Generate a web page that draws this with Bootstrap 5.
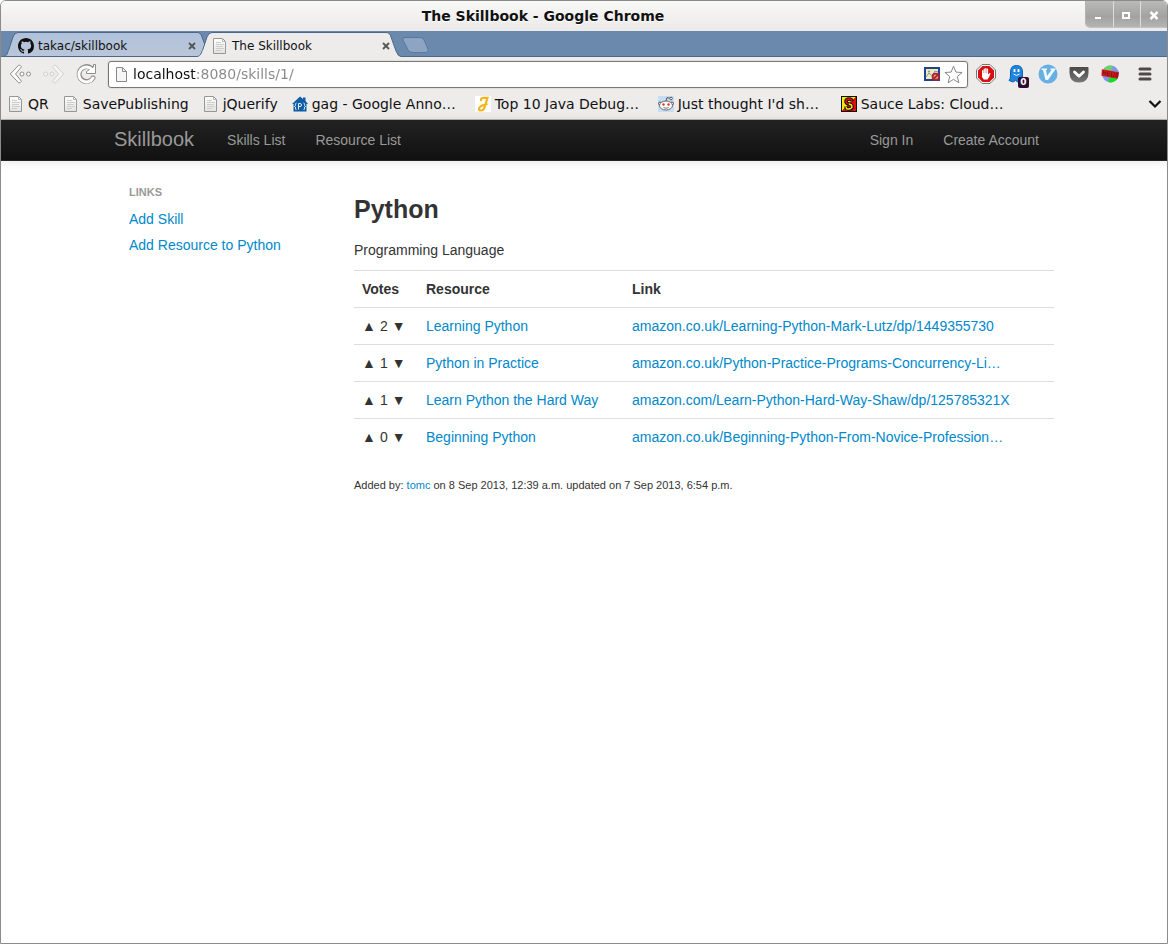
<!DOCTYPE html>
<html lang="en">
<head>
<meta charset="utf-8">
<meta name="viewport" content="width=device-width, initial-scale=1">
<title>The Skillbook</title>
<link href="https://cdn.jsdelivr.net/npm/bootstrap@5.3.0/dist/css/bootstrap.min.css" rel="stylesheet">
<style>
  :root { --chrome: #edeceb; --edge: #8b8b89; --link: #0088cc; }
  body { font: 14px/20px "Liberation Sans", Arial, sans-serif; color: #333; }
  svg { display: block; flex: none; }
  .app-window { border: 1px solid var(--edge); border-radius: 6px 6px 0 0; overflow: hidden; background: #fff; }
  .chrome-ui { font-family: "DejaVu Sans", sans-serif; color: #111; background: var(--chrome); }
  .chrome-ui button { border: 0; padding: 0; background: none; }

  /* title bar */
  .titlebar { height: 30px; background: linear-gradient(#f8f8f7, #ebeae8); }
  .window-title { font-size: 14px; font-weight: 700; line-height: 30px; text-shadow: 0 1px #fff; }
  .chrome-ui .window-buttons { height: 27px; border-left: 1px solid #b4b4b2; border-bottom: 1px solid #c4c3c1; border-radius: 0 0 0 5px; overflow: hidden; }
  .chrome-ui .window-buttons button { width: 27px; background: linear-gradient(#bababa, #a2a2a0 60%, #b4b4b2); }
  .chrome-ui .window-buttons button + button { border-left: 1px solid #dededc; }

  /* tab strip */
  .tabstrip { height: 26px; background: #6b89ad; border-bottom: 1px solid #4c678d; padding-left: 2px; }
  .browser-tab { position: relative; width: 202px; height: 26px; padding: 3px 8px 0 15px; font-size: 12px; line-height: 22px; }
  .browser-tab + .browser-tab { margin-left: -8px; }
  .tab-shape { position: absolute; left: 0; top: 0; }
  .browser-tab > :not(.tab-shape) { position: relative; }

  /* toolbar */
  .toolbar { height: 34px; padding: 0 12px 0 7px; }
  .omnibox { height: 27px; border: 1px solid #777; border-radius: 3px; background: #fff; box-shadow: 0 0 0 1px #e0dfdd; }
  .address { border: 0; outline: 0; padding: 0; min-width: 0; font: 14px/20px "DejaVu Sans", sans-serif; color: transparent; caret-color: #111; background: linear-gradient(90deg, #111 64px, #888 64px); -webkit-background-clip: text; background-clip: text; }
  .extensions { gap: 11px; margin-left: 8px; }
  .ext-badge { position: absolute; left: 11px; top: 13px; width: 11px; height: 11px; border-radius: 2px; background: #2b0c33; color: #fff; font-size: 9px; line-height: 11px; font-weight: 700; text-align: center; }

  /* bookmarks */
  .bookmarks { height: 29px; padding: 0 5px 2px 7px; gap: 14px; border-bottom: 1px solid #b5b4b2; font-size: 14px; line-height: 24px; }
  .bookmarks a { color: #111; text-decoration: none; white-space: nowrap; }
  .bookmarks .long-mark { width: 169px; }

  /* page */
  .page-container { width: 100%; max-width: 940px; margin: 0 auto; }
  .site-nav { height: 41px; padding: 0; background: linear-gradient(#222, #111); border-bottom: 1px solid #252525; box-shadow: 0 1px 10px rgba(0,0,0,.1); }
  .site-nav .navbar-brand { font-size: 20px; line-height: 20px; padding: 0 0 2px; margin: 0 18px 0 0; color: #999; }
  .site-nav .nav-link { padding: 10px 15px; color: #999; }
  .page-body { padding-top: 20px; }
  .page-body a { color: var(--link); text-decoration: none; }
  .side-links { flex: none; width: 240px; padding: 0 15px; }
  .side-title { font-size: 11px; line-height: 22px; font-weight: 700; color: #999; text-transform: uppercase; margin: 0 0 3px; }
  .side-links a { padding: 3px 0; }
  .skill-detail { min-width: 0; }
  .skill-title { font-size: 25px; line-height: 40px; font-weight: 700; margin: 8px 0 11px; }
  .skill-summary { margin: 0 0 10px; }
  .skill-table { --bs-table-color: #333; margin: 0 0 20px; table-layout: fixed; }
  .skill-table > :not(caption) > * > * { padding: 8px; border-width: 1px 0 0; border-color: #ddd; }
  .votes-col { width: 64px; }
  .resource-col { width: 206px; }
  .vote-cell { white-space: nowrap; }
  .vote-cell button { border: 0; padding: 0; background: none; color: inherit; line-height: 20px; width: 14px; }
  .added-by { font-size: 11px; }
</style>
</head>
<body>
<svg width="0" height="0" class="position-absolute" aria-hidden="true">
  <defs>
    <linearGradient id="paper" x1="0" y1="0" x2="0" y2="1"><stop offset="0" stop-color="#fff"/><stop offset="1" stop-color="#e2e2e0"/></linearGradient>
    <linearGradient id="tabfill" x1="0" y1="0" x2="0" y2="1"><stop offset="0" stop-color="#b0c2da"/><stop offset="1" stop-color="#bac6d9"/></linearGradient>
    <linearGradient id="pocket" x1="0" y1="0" x2="0" y2="1"><stop offset="0" stop-color="#4a4a4a"/><stop offset="1" stop-color="#777"/></linearGradient>
    <symbol id="doc" viewBox="0 0 16 16"><path d="M1.500 .5h9l3 3v12h-12z" fill="url(#paper)" stroke="#969894"/><path d="M10.500 .5v3h3" fill="none" stroke="#b5b6b3"/><path d="M4 4.500h5M4 6.500h8M4 8.500h7M4 10.500h8M4 12.500h5" stroke="#cdcecb"/></symbol>
    <symbol id="cross" viewBox="0 0 10 10"><path d="M2 2l6 6M8 2L2 8" stroke="#555" stroke-width="1.800"/></symbol>
  </defs>
</svg>

<div class="app-window d-flex flex-column min-vh-100">
  <header class="chrome-ui">
    <div class="titlebar d-flex">
      <div class="window-title flex-grow-1 text-center">The Skillbook - Google Chrome</div>
      <div class="window-buttons d-flex">
        <button type="button" aria-label="Minimize"><svg width="26" height="26"><path d="M9 17h6" stroke="#fff" stroke-width="2"/></svg></button>
        <button type="button" aria-label="Maximize"><svg width="26" height="26"><path d="M9 12h6v5h-6z" fill="none" stroke="#fff" stroke-width="2"/></svg></button>
        <button type="button" aria-label="Close"><svg width="26" height="26"><path d="M9.500 11l7 7M16.500 11l-7 7" stroke="#fff" stroke-width="2.500"/></svg></button>
      </div>
    </div>

    <div class="tabstrip d-flex">
      <div class="browser-tab d-flex align-items-center gap-1">
        <svg class="tab-shape" width="202" height="26"><path d="M0 25.500C5 25 4 22 6 18L10 6Q11.500 1.500 15 1.500H194Q198 1.500 199 6L202 14V25.500Z" fill="url(#tabfill)" stroke="#4c678d"/></svg>
        <svg width="16" height="16" viewBox="0 0 16 16"><path fill="#111" d="M8 0C3.580 0 0 3.580 0 8c0 3.540 2.290 6.530 5.470 7.590.4.070.55-.17.55-.38 0-.19-.01-.82-.01-1.490-2.010.37-2.530-.49-2.690-.94-.09-.23-.48-.94-.82-1.130-.28-.15-.68-.52-.01-.53.63-.01 1.080.58 1.230.82.72 1.210 1.870.87 2.330.66.070-.52.28-.87.51-1.070-1.780-.2-3.640-.89-3.640-3.950 0-.87.31-1.590.82-2.150-.08-.2-.36-1.020.08-2.120 0 0 .67-.21 2.200.82a7.500 7.500 0 0 1 4 0c1.530-1.040 2.200-.82 2.200-.82.44 1.100.16 1.920.08 2.120.51.56.82 1.270.82 2.150 0 3.070-1.870 3.750-3.650 3.950.29.25.54.73.54 1.480 0 1.070-.01 1.930-.01 2.200 0 .21.15.46.55.38A8 8 0 0 0 16 8c0-4.420-3.580-8-8-8"/></svg>
        <span class="flex-grow-1">takac/skillbook</span>
        <button type="button" aria-label="Close takac/skillbook"><svg width="10" height="10"><use href="#cross"/></svg></button>
      </div>
      <div class="browser-tab d-flex align-items-center gap-1">
        <svg class="tab-shape" width="204" height="27"><path d="M-1 25.500C4 25 4 22 6 18L10 6Q11.500 1.500 15 1.500H189Q193 1.500 194 6L199 20Q201 25.500 204 25.500V27H-1Z" fill="#edeceb"/><path d="M0 25.500C4 25 4 22 6 18L10 6Q11.500 1.500 15 1.500H189Q193 1.500 194 6L199 20Q201 25.500 204 25.500" fill="none" stroke="#4c678d"/></svg>
        <svg width="16" height="16"><use href="#doc"/></svg>
        <span class="flex-grow-1">The Skillbook</span>
        <button type="button" aria-label="Close The Skillbook"><svg width="10" height="10"><use href="#cross"/></svg></button>
      </div>
      <button type="button" aria-label="New tab"><svg width="30" height="25"><path d="M4 6.500H21Q24 6.500 25 9L29 18Q30 21.500 26 21.500H14Q10 21.500 9 19L4 9Q3 6.500 6 6.500Z" fill="#8da4c2" stroke="#5a779e"/></svg></button>
    </div>

    <div class="toolbar d-flex align-items-center">
      <button type="button" class="me-2" aria-label="Back"><svg width="24" height="22" viewBox="0 0 24 22"><path d="M13.500 3.800L12 2.300 10.500 2.300 2.300 11 10.500 19.700H12L13.500 18.200 7.500 11Z" fill="#fcfcfc" stroke="#8f8f8c"/><circle cx="14" cy="11" r="2" fill="#fcfcfc" stroke="#8f8f8c"/><circle cx="20.500" cy="11" r="2" fill="#fcfcfc" stroke="#8f8f8c"/></svg></button>
      <button type="button" class="me-2" aria-label="Forward"><svg width="26" height="22" viewBox="0 0 26 22"><path d="M12.500 3.800L14 2.300H15.500L23.700 11 15.500 19.700H14L12.500 18.200 18.500 11Z" fill="#f4f4f3" stroke="#d0d0cd"/><circle cx="5.500" cy="11" r="2" fill="#f4f4f3" stroke="#d0d0cd"/><circle cx="12" cy="11" r="2" fill="#f4f4f3" stroke="#d0d0cd"/></svg></button>
      <button type="button" class="me-2" aria-label="Reload"><svg width="26" height="24" viewBox="0 0 26 24"><path d="M17 6A7.500 7.500 0 1 0 19 16" fill="none" stroke="#8f8f8c" stroke-width="5" stroke-linecap="round"/><path d="M19.500 2.500H21.500V11.500H12.500V9.500L19.500 5Z" fill="#fff" stroke="#8f8f8c"/><path d="M18 7.500A7.500 7.500 0 1 0 19 16" fill="none" stroke="#fff" stroke-width="3" stroke-linecap="round"/></svg></button>
      <div class="omnibox d-flex align-items-center flex-grow-1 ps-1">
        <svg width="16" height="18" viewBox="0 0 16 18"><path d="M3.500 2.500h6l4 4v10h-10z" fill="#f6f6f6" stroke="#888"/><path d="M9.500 2.500v4h4" fill="none" stroke="#888"/></svg>
        <input type="text" class="address flex-grow-1 ms-1" aria-label="Address" value="localhost:8080/skills/1/">
        <svg width="16" height="14" viewBox="0 0 16 14"><path d="M0 0h16v14H0z" fill="#1f4391"/><path d="M2 2h12v10H2z" fill="#f4e9bd"/><path d="M2 10l3-4 3 3 3-5 3 1" stroke="#6d9ec4" fill="none"/><circle cx="5" cy="4.500" r="1" fill="#7aa74f"/><circle cx="11.800" cy="9.800" r="3.200" fill="#cbb9b9" stroke="#b52222" stroke-width="1.800"/><path d="M9.500 12l4.500-4.500" stroke="#b52222" stroke-width="1.800"/></svg>
        <svg class="ms-1 me-1" width="19" height="19" viewBox="0 0 19 19"><path d="M9.500 1.200l2.400 5.900 6.200.4-4.800 4 1.600 6.300-5.400-3.400-5.400 3.400 1.600-6.300-4.800-4 6.200-.4z" fill="#fff" stroke="#888"/></svg>
      </div>
      <div class="extensions d-flex align-items-center">
        <button type="button" aria-label="Ad blocker"><svg width="20" height="20" viewBox="0 0 20 20"><path d="M6 .5h8L19.500 6v8L14 19.500H6L.5 14V6z" fill="#fff" stroke="#777"/><path d="M6.500 2h7L18 6.500v7L13.500 18h-7L2 13.500v-7z" fill="#d8100f"/><path d="M6 10V6.500q.7-.8 1.300 0V9h.3V5q.7-.8 1.300 0v4h.3V4.300q.7-.8 1.300 0V9h.3V5q.7-.8 1.300 0v5.500l1.200-1.300q1-.3 1.200.5L12.800 13.500 11.500 15.500H7.800L6 13z" fill="#fff"/></svg></button>
        <button type="button" class="position-relative" aria-label="Tracker blocker"><svg width="20" height="20" viewBox="0 0 20 20"><path d="M3.500 8Q3.500 1.500 9.500 1.500T15.500 8V17.500L13 16 11 18 8.500 16.500 6 18 2 16.500Q3.500 15 3.500 12Z" fill="#1d86dc" stroke="#0c62b4"/><path d="M7.500 5v3M11.500 5v3" stroke="#fff" stroke-width="1.800"/><path d="M6.500 10q3 3 6 0" fill="none" stroke="#fff"/></svg><span class="ext-badge">0</span></button>
        <button type="button" aria-label="Vimium"><svg width="20" height="20" viewBox="0 0 20 20"><circle cx="10" cy="10" r="9.500" fill="#66b0e4"/><path d="M3.500 4.500H9V6H8L9 12 13.500 6H12.500V4.500H18L10 16H7.500L5 6H3.500Z" fill="#f4f9fd"/></svg></button>
        <button type="button" aria-label="Pocket"><svg width="20" height="20" viewBox="0 0 20 20"><path d="M1.500 3h17Q19.500 3 19.500 4V9Q19.500 18.500 10 18.500T.5 9V4Q.5 3 1.500 3Z" fill="url(#pocket)"/><path d="M5.500 8l4.500 4.300L14.500 8" fill="none" stroke="#fff" stroke-width="2.800" stroke-linecap="round" stroke-linejoin="round"/></svg></button>
        <button type="button" aria-label="Hello"><svg width="20" height="20" viewBox="0 0 20 20"><circle cx="10.500" cy="10" r="8.500" fill="#8097e8"/><path d="M11 10L18 14A8.500 8.500 0 0 1 8 18Z" fill="#13e01a"/><path d="M3.500 5A8.500 8.500 0 0 1 13 2L10 8Z" fill="#6fcf6b"/><g transform="rotate(12 10 10)"><path d="M1 7L18.500 6.500V13L2 13.500Z" fill="#cf1a1a"/><path d="M3 8v4M5.500 8v4M3 10h2.500M7.500 8v4h2M7.500 8h2M7.500 10h2M11.500 7.500v4.500h1.500M14 7.500v4.500h1M16 8h1.500v3.500H16Z" fill="none" stroke="#8a1010" stroke-width=".8"/></g></svg></button>
        <button type="button" class="ms-1" aria-label="Menu"><svg width="20" height="20" viewBox="0 0 20 20"><path d="M5 5h10M5 10h10M5 15h10" stroke="#4e4a4b" stroke-width="3" stroke-linecap="round"/></svg></button>
      </div>
    </div>

    <nav class="bookmarks d-flex align-items-center" aria-label="Bookmarks">
      <a href="#" class="d-flex align-items-center gap-1"><svg width="16" height="16"><use href="#doc"/></svg>QR</a>
      <a href="#" class="d-flex align-items-center gap-1"><svg width="16" height="16"><use href="#doc"/></svg>SavePublishing</a>
      <a href="#" class="d-flex align-items-center gap-1"><svg width="16" height="16"><use href="#doc"/></svg>jQuerify</a>
      <a href="#" class="long-mark d-flex align-items-center gap-1"><svg width="16" height="16" viewBox="0 0 16 16"><path d="M8 .5L11 3V1.500H13.500V5L16 8H14.500V15.500H1.500V8H0Z" fill="#0f5da6"/><path d="M4.500 7Q3.500 7 3.500 8.500T2.500 10.500Q3.500 10.500 3.500 12T4.500 14M11.500 7Q12.500 7 12.500 8.500T13.500 10.500Q12.500 10.500 12.500 12T11.500 14M6.500 13.500V7.500H8Q9.500 7.500 9.500 9T8 10.500H6.500" fill="none" stroke="#e3eefa"/></svg>gag - Google Anno…</a>
      <a href="#" class="long-mark d-flex align-items-center gap-1"><svg width="16" height="16" viewBox="0 0 16 16"><path d="M0 0h16v16H0z" fill="#fff"/><path d="M6 5Q5.500 1.800 9 1.800H12.500L10 10Q9 14.500 6 14.500T4.500 11.500Q5.500 9.500 12.500 8" fill="none" stroke="#f5b417" stroke-width="2.200"/></svg>Top 10 Java Debug…</a>
      <a href="#" class="long-mark d-flex align-items-center gap-1"><svg width="16" height="16" viewBox="0 0 16 16"><path d="M0 0h16v16H0z" fill="#c6def5"/><path d="M8 5L9 1.500 12.500 2.500" fill="none" stroke="#555"/><circle cx="13" cy="2.500" r="1.300" fill="#fff" stroke="#555"/><circle cx="2" cy="7.500" r="1.500" fill="#fff" stroke="#555"/><circle cx="14" cy="7.500" r="1.500" fill="#fff" stroke="#555"/><ellipse cx="8" cy="9.500" rx="6.500" ry="4.500" fill="#fff" stroke="#666"/><circle cx="5.500" cy="8.500" r="1.200" fill="#f1321c"/><circle cx="10.500" cy="8.500" r="1.200" fill="#f1321c"/><path d="M5.500 11.500q2.500 1.500 5 0" fill="none" stroke="#777"/></svg>Just thought I'd sh…</a>
      <a href="#" class="long-mark d-flex align-items-center gap-1"><svg width="16" height="16" viewBox="0 0 16 16"><path d="M0 0h16v16H0z" fill="#111"/><path d="M1 1h14L1 15z" fill="#f4ea10"/><path d="M15 1v14H1z" fill="#e80c0c"/><path d="M11 5.500Q11 3 8 3T5 5.500Q5 7.500 8 8T11 10.500Q11 13 8 13T5 10.500" fill="none" stroke="#111" stroke-width="3.600"/><path d="M11 5.500Q11 3 8 3T5 5.500Q5 7.500 8 8" fill="none" stroke="#e80c0c" stroke-width="1.400"/><path d="M8 8Q11 8.500 11 10.500T8 13T5 10.500" fill="none" stroke="#f4ea10" stroke-width="1.400"/></svg>Sauce Labs: Cloud…</a>
      <button type="button" class="ms-auto" aria-label="More bookmarks"><svg width="14" height="10" viewBox="0 0 14 10"><path d="M1.500 2L7 7.500 12.500 2" fill="none" stroke="#111" stroke-width="2.200"/></svg></button>
    </nav>
  </header>

  <nav class="navbar site-nav" aria-label="Main">
    <div class="page-container d-flex align-items-center">
      <a class="navbar-brand" href="#">Skillbook</a>
      <a class="nav-link" href="#">Skills List</a>
      <a class="nav-link" href="#">Resource List</a>
      <a class="nav-link ms-auto" href="#">Sign In</a>
      <a class="nav-link" href="#">Create Account</a>
    </div>
  </nav>

  <main class="page-body flex-grow-1">
    <div class="page-container d-flex">
      <aside class="side-links">
        <h2 class="side-title">Links</h2>
        <a class="d-block" href="#">Add Skill</a>
        <a class="d-block" href="#">Add Resource to Python</a>
      </aside>
      <section class="skill-detail flex-grow-1">
        <h1 class="skill-title">Python</h1>
        <p class="skill-summary">Programming Language</p>
        <table class="table skill-table">
          <thead>
            <tr><th class="votes-col" scope="col">Votes</th><th class="resource-col" scope="col">Resource</th><th scope="col">Link</th></tr>
          </thead>
          <tbody>
            <tr><td class="vote-cell"><button type="button">▲</button> 2 <button type="button">▼</button></td><td><a href="#">Learning Python</a></td><td><a href="#">amazon.co.uk/Learning-Python-Mark-Lutz/dp/1449355730</a></td></tr>
            <tr><td class="vote-cell"><button type="button">▲</button> 1 <button type="button">▼</button></td><td><a href="#">Python in Practice</a></td><td><a href="#">amazon.co.uk/Python-Practice-Programs-Concurrency-Li…</a></td></tr>
            <tr><td class="vote-cell"><button type="button">▲</button> 1 <button type="button">▼</button></td><td><a href="#">Learn Python the Hard Way</a></td><td><a href="#">amazon.com/Learn-Python-Hard-Way-Shaw/dp/125785321X</a></td></tr>
            <tr><td class="vote-cell"><button type="button">▲</button> 0 <button type="button">▼</button></td><td><a href="#">Beginning Python</a></td><td><a href="#">amazon.co.uk/Beginning-Python-From-Novice-Profession…</a></td></tr>
          </tbody>
        </table>
        <p class="added-by">Added by: <a href="#">tomc</a> on 8 Sep 2013, 12:39 a.m. updated on 7 Sep 2013, 6:54 p.m.</p>
      </section>
    </div>
  </main>
</div>
<script src="https://cdn.jsdelivr.net/npm/bootstrap@5.3.0/dist/js/bootstrap.bundle.min.js"></script>
</body>
</html>
